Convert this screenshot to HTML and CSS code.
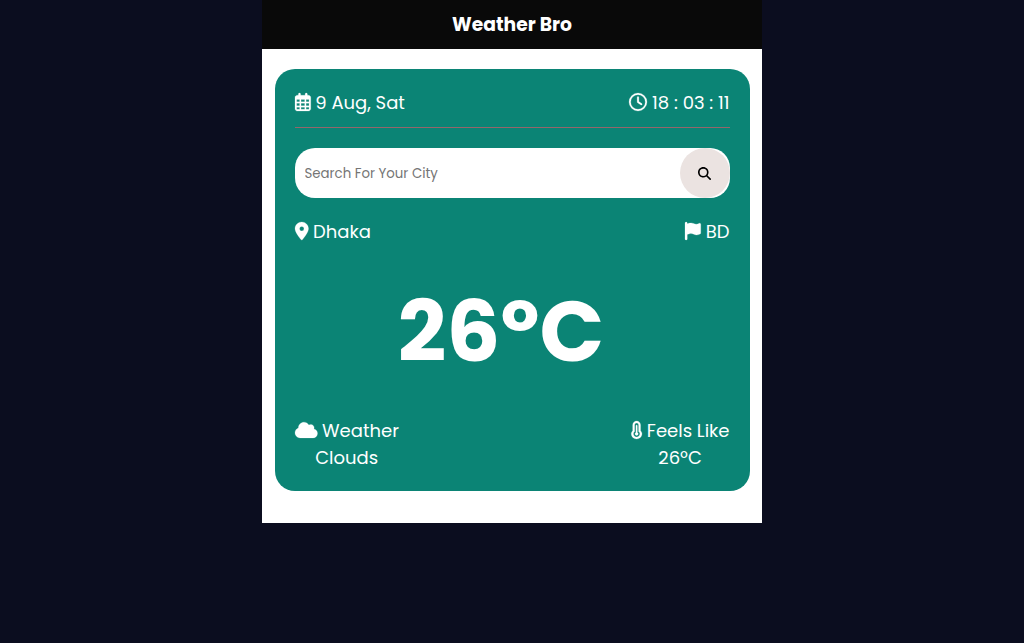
FILE: index.html
```html
<!DOCTYPE html>
<html lang="en">
<head>
<meta charset="utf-8">
<meta name="viewport" content="width=device-width, initial-scale=1">
<title>Weather Bro</title>
<link rel="stylesheet" href="styles.css">
</head>
<body>
<div class="app">
  <header class="header"><h3 class="title">Weather Bro</h3></header>
  <main class="card">
    <div class="row row-top">
      <span class="item"><svg class="icon" viewBox="0 0 448 512" aria-hidden="true"><path fill-rule="evenodd" d="M128 0c17.700 0 32 14.300 32 32V64H288V32c0-17.700 14.300-32 32-32s32 14.300 32 32V64h32c35.300 0 64 28.700 64 64V448c0 35.300-28.700 64-64 64H64c-35.300 0-64-28.700-64-64V128C0 92.700 28.700 64 64 64H96V32c0-17.700 14.300-32 32-32zM48 188v64h84V188zM172 188v64h104V188zM316 188v64h84V188zM48 292v72h84V292zM172 292v72h104V292zM316 292v72h84V292zM48 404v60h84V404zM172 404v60h104V404zM316 404v60h84V404z"/></svg>9 Aug, Sat</span>
      <span class="item"><svg class="icon" viewBox="0 0 512 512" aria-hidden="true"><path d="M464 256A208 208 0 1 1 48 256a208 208 0 1 1 416 0zM0 256a256 256 0 1 0 512 0A256 256 0 1 0 0 256zM232 120V256c0 8 4 15.500 10.700 20l96 64c11 7.400 25.900 4.400 33.300-6.700s4.400-25.900-6.700-33.300L280 243.200V120c0-13.300-10.700-24-24-24s-24 10.700-24 24z"/></svg>18 : 03 : 11</span>
    </div>
    <form class="search">
      <input class="search-input" type="text" placeholder="Search For Your City" aria-label="Search For Your City">
      <button class="search-button" type="button" aria-label="Search"><svg class="search-icon" viewBox="0 0 512 512" aria-hidden="true"><path d="M416 208c0 45.900-14.900 88.300-40 122.700L502.600 457.400c12.500 12.500 12.500 32.800 0 45.300s-32.800 12.500-45.300 0L330.700 376c-34.400 25.200-76.800 40-122.700 40C93.100 416 0 322.900 0 208S93.100 0 208 0S416 93.100 416 208zM208 352a144 144 0 1 0 0-288 144 144 0 1 0 0 288z"/></svg></button>
    </form>
    <div class="row">
      <span class="item"><svg class="icon" viewBox="0 0 384 512" aria-hidden="true"><path d="M215.700 499.200C267 435 384 279.400 384 192C384 86 298 0 192 0S0 86 0 192c0 87.400 117 243 168.300 307.200c12.300 15.300 35.100 15.300 47.400 0zM192 128a64 64 0 1 1 0 128 64 64 0 1 1 0-128z"/></svg>Dhaka</span>
      <span class="item"><svg class="icon" viewBox="0 0 448 512" aria-hidden="true"><path d="M64 32C64 14.300 49.700 0 32 0S0 14.300 0 32V480c0 17.700 14.300 32 32 32s32-14.300 32-32V352l64.300-16.100c41.100-10.300 84.600-5.500 122.500 13.400c44.200 22.100 95.500 24.800 141.700 7.400l34.700-13c12.500-4.700 20.800-16.600 20.800-30V66.100c0-23-24.200-38-44.800-27.700l-9.600 4.800c-46.300 23.200-100.800 23.200-147.100 0c-35.100-17.600-75.400-22-113.500-12.500L64 48V32z"/></svg>BD</span>
    </div>
    <h2 class="temperature">26ºC</h2>
    <div class="row">
      <div class="detail">
        <span class="item"><svg class="icon" viewBox="0 0 640 512" aria-hidden="true"><path d="M0 336c0 79.500 64.500 144 144 144H512c70.700 0 128-57.300 128-128c0-61.900-44-113.600-102.400-125.400c4.100-10.700 6.400-22.400 6.400-34.600c0-53-43-96-96-96c-19.700 0-38.100 6-53.300 16.200C367 64.200 315.300 32 256 32C167.600 32 96 103.600 96 192c0 2.700 .1 5.400 .2 8.100C40.200 219.800 0 273.200 0 336z"/></svg>Weather</span>
        <span>Clouds</span>
      </div>
      <div class="detail">
        <span class="item"><svg class="icon" viewBox="0 0 320 512" aria-hidden="true"><path fill-rule="evenodd" d="M160 0C98 0 48 50 48 112V276.500C24 301 8 331 8 364C8 446 76 512 160 512S312 446 312 364C312 331 296 301 272 276.500V112C272 50 222 0 160 0zM160 58c-31 0-56 24-56 54V300c-24 18-36 40-36 64c0 50 41 90 92 90s92-40 92-90c0-24-12-46-36-64V112c0-30-25-54-56-54z"/><path d="M160 112c12 0 20 8 20 20V326c16 8 26 22 26 38c0 26-20 46-46 46s-46-20-46-46c0-16 10-30 26-38V132c0-12 8-20 20-20z"/></svg>Feels Like</span>
        <span>26ºC</span>
      </div>
    </div>
  </main>
</div>
</body>
</html>
```
FILE: styles.css
```css
* {
  box-sizing: border-box;
  margin: 0;
  padding: 0;
}

body {
  background: #0b0d1f;
  color: #fff;
  font-family: Poppins, Inter, sans-serif;
  line-height: 27px;
}

.app {
  width: 100%;
  max-width: 500px;
  margin: 0 auto;
  padding-bottom: 32px;
  background: #fff;
}

.header {
  padding: 11px;
  background: #090909;
  text-align: center;
}

.title {
  font-weight: 700;
}

.card {
  width: 95%;
  margin: 20px auto 0;
  padding: 20px;
  border-radius: 20px;
  background: #0b8475;
  font-size: 18px;
}

.row {
  display: flex;
  justify-content: space-between;
}

.row-top {
  padding-bottom: 11px;
  border-bottom: 1px solid #94666a;
}

.item {
  display: flex;
  align-items: center;
  gap: 5px;
}

.icon {
  height: 18px;
  margin-bottom: 2px;
  overflow: visible;
  fill: currentColor;
  stroke: currentColor;
  stroke-width: 6px;
}

.search {
  display: flex;
  height: 50px;
  margin: 20px 0;
  border-radius: 20px;
  background: #fff;
  overflow: hidden;
}

.search-input {
  flex: 1;
  min-width: 0;
  padding: 2px 10px 0;
  border: 0;
  background: none;
  font-family: inherit;
}

.search-input::placeholder {
  color: #757575;
}

.search-button {
  display: grid;
  place-items: center;
  width: 50px;
  border: 0;
  border-radius: 50%;
  background: #ebe3e1;
}

.search-icon {
  height: 13px;
}

.temperature {
  padding: 21px 22px 19px 0;
  font-size: 85px;
  font-weight: 700;
  line-height: 132px;
  text-align: center;
}

.detail {
  display: flex;
  flex-direction: column;
  align-items: center;
}
```
